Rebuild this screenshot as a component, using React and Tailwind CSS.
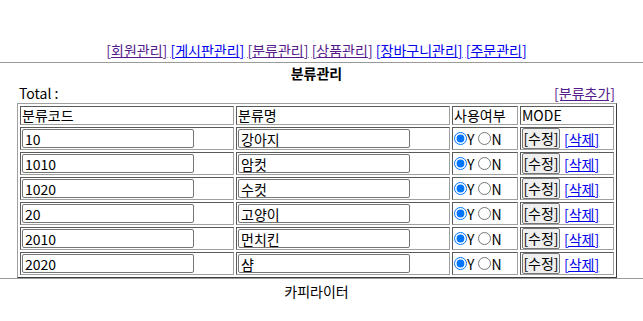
import { useState } from "react";

const NAV = [
  { label: "회원관리", visited: true },
  { label: "게시판관리", visited: false },
  { label: "분류관리", visited: true },
  { label: "상품관리", visited: true },
  { label: "장바구니관리", visited: false },
  { label: "주문관리", visited: false },
];

const ROWS = [
  { code: "10", name: "강아지" },
  { code: "1010", name: "암컷" },
  { code: "1020", name: "수컷" },
  { code: "20", name: "고양이" },
  { code: "2010", name: "먼치킨" },
  { code: "2020", name: "샴" },
];

const cell =
  "border border-t-[#5a5a5a] border-l-[#5a5a5a] border-r-[#a0a0a0] border-b-[#a0a0a0] p-[1px] align-middle text-left";

const field =
  "block w-[172px] h-[19px] px-[2px] text-[14px] leading-[17px] border border-[#767676] rounded-[2px] bg-white";

function App() {
  const [rows] = useState(ROWS);

  return (
    <div className="min-h-[321px] bg-white text-black text-[14px] leading-[18px] font-['Noto_Sans_CJK_KR',sans-serif]">
      {/* NAV */}
      <div className="w-[633px] pt-[41px] text-center">
        {NAV.map((n, i) => (
          <span key={i}>
            <a
              href="#"
              className={`underline ${n.visited ? "text-[#551a8b]" : "text-[#0000ee]"}`}
            >
              [{n.label}]
            </a>
            {i < NAV.length - 1 ? " " : ""}
          </span>
        ))}
      </div>

      <div className="mt-[3px] h-px bg-[#9a9a9a]" />

      {/* TITLE */}
      <div className="w-[633px] mt-[1px] text-center font-bold">분류관리</div>

      {/* TOTAL */}
      <div className="ml-[17px] w-[600px] mt-[2px] px-[2px] flex justify-between">
        <span>Total :</span>
        <a href="#" className="underline text-[#551a8b]">
          [분류추가]
        </a>
      </div>

      {/* TABLE */}
      <table className="ml-[17px] mt-[1px] w-[600px] table-fixed border-separate border-spacing-[2px] border border-t-[#a0a0a0] border-l-[#a0a0a0] border-r-[#3c3c3c] border-b-[#3c3c3c]">
        <thead>
          <tr>
            <th className={`${cell} w-[214px] h-[19px] leading-[15px] font-normal`}>분류코드</th>
            <th className={`${cell} w-[214px] h-[19px] leading-[15px] font-normal`}>분류명</th>
            <th className={`${cell} w-[66px] h-[19px] leading-[15px] font-normal`}>사용여부</th>
            <th className={`${cell} w-[94px] h-[19px] leading-[15px] font-normal`}>MODE</th>
          </tr>
        </thead>
        <tbody>
          {rows.map((r, idx) => (
            <tr key={idx}>
              <td className={cell}>
                <div className="h-[19px] flex items-center">
                  <input defaultValue={r.code} className={field} />
                </div>
              </td>
              <td className={cell}>
                <div className="h-[19px] flex items-center">
                  <input defaultValue={r.name} className={field} />
                </div>
              </td>
              <td className={cell}>
                <div className="h-[19px] flex items-center whitespace-nowrap">
                  <input
                    type="radio"
                    name={`use${idx}`}
                    defaultChecked
                    className="m-0 w-[13px] h-[13px] accent-[#0075ff]"
                  />
                  <span>Y</span>
                  <input
                    type="radio"
                    name={`use${idx}`}
                    className="m-0 ml-[4px] w-[13px] h-[13px]"
                  />
                  <span>N</span>
                </div>
              </td>
              <td className={cell}>
                <div className="h-[19px] flex items-center whitespace-nowrap">
                  <button className="w-[38px] h-[21px] p-0 bg-[#efefef] border border-[#767676] rounded-[2px] text-[14px] leading-[17px] text-center">
                    [수정]
                  </button>
                  <a href="#" className="ml-[4px] underline text-[#0000ee]">
                    [삭제]
                  </a>
                </div>
              </td>
            </tr>
          ))}
        </tbody>
      </table>

      <div className="h-px bg-[#9a9a9a]" />

      {/* FOOTER */}
      <div className="w-[633px] mt-[3px] text-center">카피라이터</div>
    </div>
  );
}

export default App;
